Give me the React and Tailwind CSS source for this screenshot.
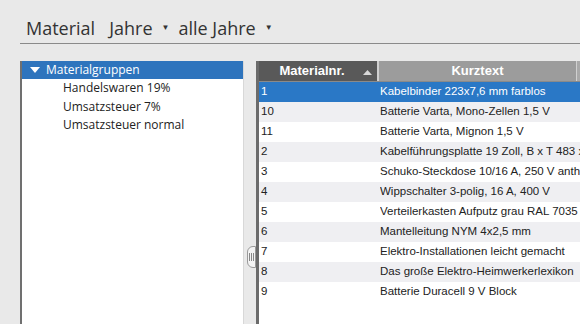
import React from "react";

const rows = [
  ["1", "Kabelbinder 223x7,6 mm farblos"],
  ["10", "Batterie Varta, Mono-Zellen 1,5 V"],
  ["11", "Batterie Varta, Mignon 1,5 V"],
  ["2", "Kabelführungsplatte 19 Zoll,  B x T 483 x"],
  ["3", "Schuko-Steckdose 10/16 A, 250 V anthra"],
  ["4", "Wippschalter 3-polig, 16 A, 400 V"],
  ["5", "Verteilerkasten Aufputz grau RAL 7035"],
  ["6", "Mantelleitung NYM 4x2,5 mm"],
  ["7", "Elektro-Installationen leicht gemacht"],
  ["8", "Das große Elektro-Heimwerkerlexikon"],
  ["9", "Batterie Duracell 9 V Block"],
];

const groups = ["Handelswaren 19%", "Umsatzsteuer 7%", "Umsatzsteuer normal"];

export default function App() {
  return (
    <div className="w-[580px] h-[324px] overflow-hidden bg-[#e9e9e9] text-[#222]">
      <div className="ml-5 h-[44px] border-b border-[#8a8a8a] flex items-end pb-[6px] pl-[6px] text-[18px] text-[#333] font-['Open_Sans',sans-serif] leading-none">
        <span>Material</span>
        <span className="ml-[14px]">Jahre</span>
        <span className="ml-[9px] text-[8px] mb-[6px]">▼</span>
        <span className="ml-[9px]">alle Jahre</span>
        <span className="ml-[9px] text-[8px] mb-[6px]">▼</span>
      </div>

      <div className="flex mt-[17px] h-[263px]">
        <div className="ml-5 w-[224px] bg-white border-l-2 border-[#707070] border-r border-r-[#d8d8d8] font-['Open_Sans',sans-serif] text-[12px]">
          <div className="h-[18px] bg-[#2e74bd] text-white flex items-center pl-[8px]">
            <svg width="10" height="8" viewBox="0 0 10 8" className="mr-[6px]">
              <path d="M0 1 L10 1 L5 7 Z" fill="white" />
            </svg>
            <span>Materialgruppen</span>
          </div>
          {groups.map((g) => (
            <div key={g} className="h-[18.5px] flex items-center pl-[41px]">
              {g}
            </div>
          ))}
        </div>

        <div className="w-[12px] flex flex-col justify-end pb-[56px]">
          <div className="ml-[3px] w-[9px] h-[22px] border border-[#9a9a9a] rounded-l-[6px] bg-[#f4f4f4] flex items-center justify-center gap-[1px]">
            <div className="w-px h-[8px] bg-[#888]" />
            <div className="w-px h-[8px] bg-[#888]" />
            <div className="w-px h-[8px] bg-[#888]" />
          </div>
        </div>

        <div className="flex-1 bg-white border-l-[3px] border-[#6b6b6b] overflow-hidden font-['Liberation_Sans',sans-serif] text-[11.5px]">
          <div className="flex h-[21px] text-white font-bold text-[13px] border-b border-[#8a8a8a]">
            <div className="w-[120px] shrink-0 bg-[#595959] border-r-2 border-[#d0d0d0] flex items-center justify-center relative">
              <span className="-ml-[12px]">Materialnr.</span>
              <svg width="9" height="5" viewBox="0 0 9 5" className="absolute right-[5px] top-[9px]">
                <path d="M0 5 L4.5 0 L9 5 Z" fill="#d8d8d8" />
              </svg>
            </div>
            <div className="w-[198px] shrink-0 bg-[#9c9c9c] border-r border-[#d0d0d0] flex items-center justify-center">
              Kurztext
            </div>
            <div className="w-[60px] shrink-0 bg-[#a9a9a9]" />
          </div>
          {rows.map(([nr, txt], i) => (
            <div
              key={nr}
              className={
                "flex h-[20px] items-center whitespace-nowrap " +
                (i === 0 ? "bg-[#2a78c6] text-white" : i % 2 === 1 ? "bg-[#efeff2]" : "bg-white")
              }
            >
              <div className="w-[121px] shrink-0 pl-[2px]">{nr}</div>
              <div className="overflow-hidden">{txt}</div>
            </div>
          ))}
        </div>
      </div>
    </div>
  );
}
